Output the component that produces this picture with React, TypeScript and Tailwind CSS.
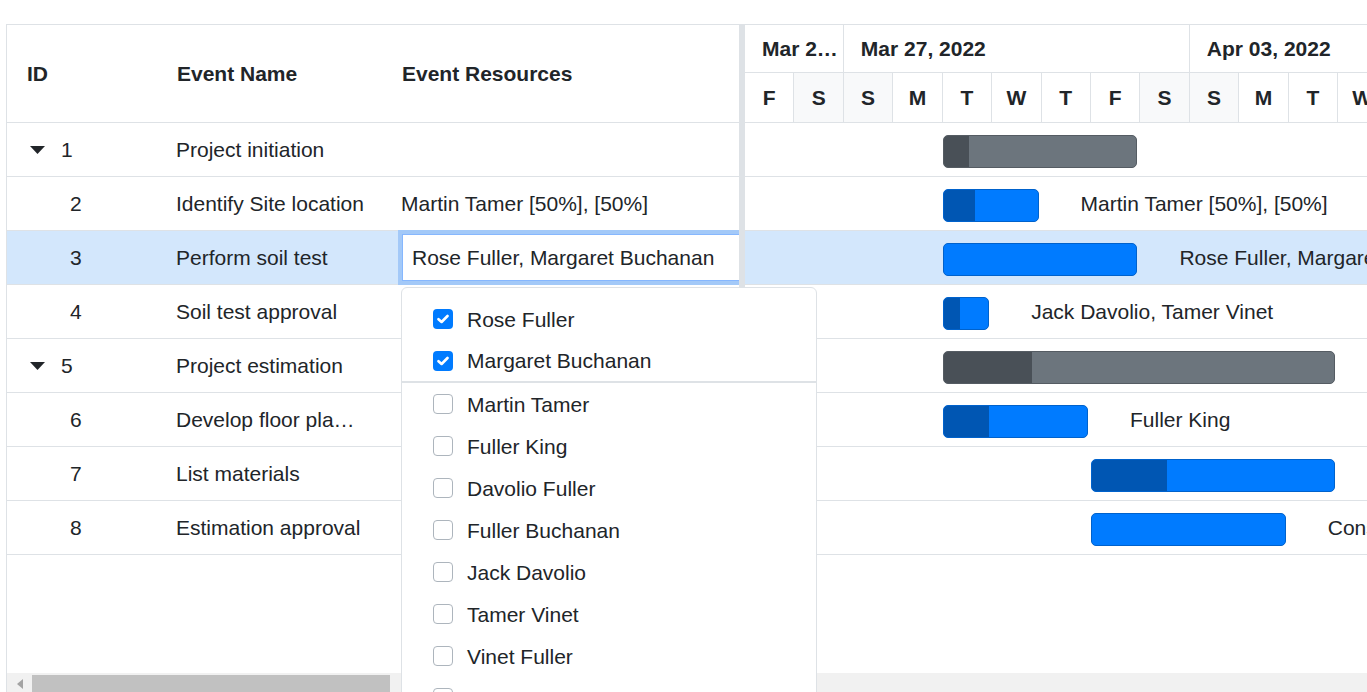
import React from 'react';

const DAY = 49.43;

type Row = {
  id: number;
  name: string;
  res: string;
  parent?: boolean;
  start: number;
  dur: number;
  prog: number;
  selected?: boolean;
};

const rows: Row[] = [
  { id: 1, name: 'Project initiation', res: '', parent: true, start: 4, dur: 4, prog: 25 },
  { id: 2, name: 'Identify Site location', res: 'Martin Tamer [50%], [50%]', start: 4, dur: 2, prog: 31 },
  { id: 3, name: 'Perform soil test', res: 'Rose Fuller, Margaret Buchanan', start: 4, dur: 4, prog: 0, selected: true },
  { id: 4, name: 'Soil test approval', res: 'Jack Davolio, Tamer Vinet', start: 4, dur: 1, prog: 16 },
  { id: 5, name: 'Project estimation', res: '', parent: true, start: 4, dur: 8, prog: 88 },
  { id: 6, name: 'Develop floor plan for estimation', res: 'Fuller King', start: 4, dur: 3, prog: 45 },
  { id: 7, name: 'List materials', res: 'Davolio Fuller', start: 7, dur: 5, prog: 75 },
  { id: 8, name: 'Estimation approval', res: 'Construction Team', start: 7, dur: 4, prog: 0 },
];

const days = ['F', 'S', 'S', 'M', 'T', 'W', 'T', 'F', 'S', 'S', 'M', 'T', 'W', 'T', 'F', 'S'];
const weekend = [1, 2, 8, 9, 15];

const weeks = [
  { label: 'Mar 25, 2022', n: 2 },
  { label: 'Mar 27, 2022', n: 7 },
  { label: 'Apr 03, 2022', n: 7 },
];

const resources = [
  { name: 'Rose Fuller', checked: true },
  { name: 'Margaret Buchanan', checked: true, sep: true },
  { name: 'Martin Tamer' },
  { name: 'Fuller King' },
  { name: 'Davolio Fuller' },
  { name: 'Fuller Buchanan' },
  { name: 'Jack Davolio' },
  { name: 'Tamer Vinet' },
  { name: 'Vinet Fuller' },
  { name: 'Bergs Anton' },
];

function Caret() {
  return (
    <svg width="15" height="8" viewBox="0 0 15 8" className="shrink-0">
      <path d="M0 0 L15 0 L7.5 8 Z" fill="#212529" />
    </svg>
  );
}

function Check({ checked }: { checked?: boolean }) {
  if (checked) {
    return (
      <span className="w-[20px] h-[20px] rounded-[4px] bg-[#007bff] flex items-center justify-center shrink-0">
        <svg width="12" height="10" viewBox="0 0 12 10">
          <path d="M1.5 5.2 L4.6 8 L10.5 2" stroke="white" strokeWidth="2.6" fill="none" strokeLinecap="round" strokeLinejoin="round" />
        </svg>
      </span>
    );
  }
  return <span className="w-[20px] h-[20px] rounded-[4px] border border-[#adb5bd] bg-white shrink-0" />;
}

function LeftPane() {
  return (
    <div className="w-[732px] shrink-0 flex flex-col overflow-hidden">
      <div className="h-[98px] border-b border-[#dee2e6] flex items-center font-bold text-[21px] leading-none shrink-0">
        <div className="w-[148px] pl-[20px]">ID</div>
        <div className="w-[225px] pl-[22px]">Event Name</div>
        <div className="flex-1 pl-[22px]">Event Resources</div>
      </div>
      <div className="flex-1 overflow-hidden">
        {rows.map((r) => (
          <div
            key={r.id}
            className={`h-[54px] border-b border-[#dee2e6] flex items-center text-[21px] leading-none ${r.selected ? 'bg-[#d3e7fc]' : 'bg-white'}`}
          >
            <div className={`w-[148px] shrink-0 flex items-center ${r.parent ? 'pl-[23px] gap-[16px]' : 'pl-[63px]'}`}>
              {r.parent && <Caret />}
              <span>{r.id}</span>
            </div>
            <div className="w-[225px] shrink-0 pl-[21px] pr-[14px] truncate leading-[26px]">{r.name}</div>
            <div className="flex-1 min-w-0 pl-[21px] flex items-center">
              {r.selected ? (
                <div className="ml-[1px] w-[360px] shrink-0 h-[47px] bg-white border border-[#86b7fe] shadow-[0_0_0_4px_#a3c9f8] flex items-center pl-[9px] whitespace-nowrap">
                  {r.res}
                </div>
              ) : (
                <span className="whitespace-nowrap">{r.res}</span>
              )}
            </div>
          </div>
        ))}
      </div>
      <div className="h-[19px] bg-[#f1f1f1] shrink-0 flex items-end relative">
        <div className="w-[25px] h-[17px] flex items-center justify-center">
          <svg width="6" height="10" viewBox="0 0 6 10">
            <path d="M6 0 L6 10 L0 5 Z" fill="#a3a3a3" />
          </svg>
        </div>
        <div className="w-[358px] h-[17px] bg-[#c1c1c1]" />
      </div>
    </div>
  );
}

function ChartPane() {
  return (
    <div className="flex-1 min-w-0 flex flex-col overflow-hidden">
      <div className="shrink-0 h-[98px] border-b border-[#dee2e6] flex flex-col font-bold text-[21px] leading-none">
        <div className="h-[48px] border-b border-[#dee2e6] flex shrink-0">
          {weeks.map((w) => (
            <div
              key={w.label}
              style={{ width: w.n * DAY }}
              className="shrink-0 border-r border-[#dee2e6] flex items-center pl-[17px] pr-[4px] overflow-hidden"
            >
              <span className="truncate leading-[26px]">{w.label}</span>
            </div>
          ))}
        </div>
        <div className="flex-1 flex">
          {days.map((d, i) => (
            <div
              key={i}
              style={{ width: DAY }}
              className={`shrink-0 border-r border-[#dee2e6] flex items-center justify-center ${weekend.includes(i) ? 'bg-[#f8f9fa]' : 'bg-white'}`}
            >
              {d}
            </div>
          ))}
        </div>
      </div>
      <div className="flex-1 overflow-hidden">
        {rows.map((r) => {
          const left = r.start * DAY;
          const width = r.dur * DAY - 3;
          const label = r.parent ? '' : r.res;
          return (
            <div
              key={r.id}
              className={`h-[54px] border-b border-[#dee2e6] relative ${r.selected ? 'bg-[#d3e7fc]' : 'bg-white'}`}
            >
              <div
                style={{ left, width }}
                className={`absolute top-[12px] h-[33px] rounded-[5px] border overflow-hidden ${r.parent ? 'bg-[#6c757d] border-[#555c63]' : 'bg-[#007bff] border-[#0062cc]'}`}
              >
                {r.prog > 0 && (
                  <div
                    style={{ width: r.prog }}
                    className={`h-full ${r.parent ? 'bg-[#495057]' : 'bg-[#0056b3]'}`}
                  />
                )}
              </div>
              {label && (
                <div
                  style={{ left: left + width + 42 }}
                  className="absolute top-0 h-full flex items-center text-[21px] leading-none whitespace-nowrap"
                >
                  {label}
                </div>
              )}
            </div>
          );
        })}
      </div>
      <div className="h-[19px] bg-[#f1f1f1] shrink-0" />
    </div>
  );
}

function Dropdown() {
  return (
    <div className="absolute left-[401px] top-[287px] w-[416px] h-[440px] bg-white border border-[#dee2e6] rounded-[6px] pt-[10px] text-[21px] leading-none text-[#212529]">
      {resources.map((r) => (
        <div
          key={r.name}
          className={`flex items-center pl-[31px] gap-[14px] ${r.sep ? 'border-b-2 border-[#dee2e6] h-[43px]' : 'h-[42px]'}`}
        >
          <Check checked={r.checked} />
          <span className="whitespace-nowrap">{r.name}</span>
        </div>
      ))}
    </div>
  );
}

export default function App() {
  return (
    <div className="w-[1367px] h-[692px] overflow-hidden bg-white relative text-[#212529] font-['Liberation_Sans',Arial,sans-serif]">
      <div className="pt-[24px] pl-[6px] h-full">
        <div className="h-[668px] border-l border-t border-[#dee2e6] flex overflow-hidden">
          <LeftPane />
          <div className="w-[6px] shrink-0 bg-[#dee2e6]" />
          <ChartPane />
        </div>
      </div>
      <Dropdown />
    </div>
  );
}
